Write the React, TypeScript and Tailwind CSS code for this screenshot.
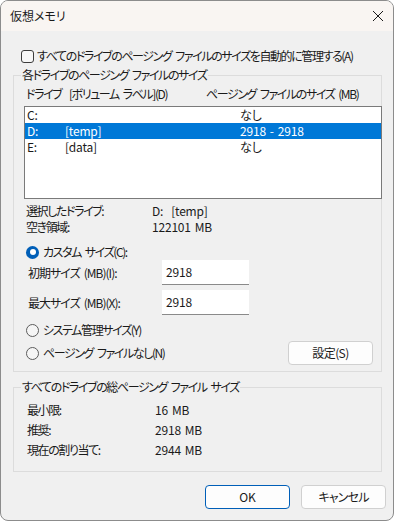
import React from "react";

const drives = [
  { d: "C:", l: "", s: "なし", sel: false },
  { d: "D:", l: "[temp]", s: "2918 - 2918", sel: true },
  { d: "E:", l: "[data]", s: "なし", sel: false },
];

// latin / numeric text is already close to the reference width
const lat = "tracking-[-0.2px] [word-spacing:1.5px]";

function Radio({ checked }: { checked?: boolean }) {
  if (checked) {
    return (
      <span className="flex h-[13px] w-[13px] shrink-0 items-center justify-center rounded-full bg-[#005fb8]">
        <span className="h-[6px] w-[6px] rounded-full bg-white"></span>
      </span>
    );
  }
  return <span className="h-[13px] w-[13px] shrink-0 rounded-full border border-[#5c5c5c] bg-[#f5f5f5]"></span>;
}

function Group({ title, className, children }: { title: string; className: string; children: React.ReactNode }) {
  return (
    <div className={`relative ml-[12px] w-[369px] border border-[#dcdcdc] ${className}`}>
      {/* legend sits over the top border */}
      <span className="absolute left-[7px] top-[-9px] whitespace-nowrap bg-[#f0f0f0] px-[1px] leading-[16px]">{title}</span>
      {children}
    </div>
  );
}

export default function App() {
  return (
    <div className="h-[523px] w-[396px] bg-white font-['Noto_Sans_CJK_JP',sans-serif] text-[12px] leading-[16px] tracking-[-1.4px] text-[#1a1a1a] [font-feature-settings:'palt'] [word-spacing:2.5px]">
      <div className="flex h-[521px] w-[394px] flex-col overflow-hidden rounded-[8px] border border-[#8c8c8c] bg-[#f0f0f0]">
        {/* title bar */}
        <div className="flex h-[30px] shrink-0 items-center justify-between bg-[#f9f5f2] pl-[9px] pr-[7px]">
          <span className="text-[12px] tracking-normal">仮想メモリ</span>
          <svg width="12" height="12" viewBox="0 0 12 12" className="mr-[2px]">
            <path d="M1 1 L11 11 M11 1 L1 11" stroke="#1a1a1a" strokeWidth="1" fill="none" />
          </svg>
        </div>

        {/* auto manage checkbox */}
        <div className="mt-[17px] flex h-[16px] items-center whitespace-nowrap pl-[20px]">
          <span className="h-[13px] w-[13px] shrink-0 rounded-[3px] border border-[#3c3c3c] bg-[#f7f7f7]"></span>
          <span className="ml-[3px]">すべてのドライブのページング ファイルのサイズを自動的に管理する(A)</span>
        </div>

        <Group title="各ドライブのページング ファイルのサイズ" className="mt-[11px] h-[297px]">
          <div className="mt-[10px] flex h-[16px] items-center whitespace-nowrap pl-[12px]">
            <span className="w-[180px]">ドライブ&nbsp; [ボリューム ラベル](D)</span>
            <span>ページング ファイルのサイズ (MB)</span>
          </div>

          <div className="ml-[10px] mt-[4px] h-[93px] w-[358px] border border-[#7a7a7a] bg-white">
            {drives.map((r) => (
              <div
                key={r.d}
                className={`flex h-[16px] items-center pl-[2px] ${lat} ${r.sel ? "bg-[#0078d7] text-white" : ""}`}
              >
                <span className="w-[38px]">{r.d}</span>
                <span className="w-[175px]">{r.l}</span>
                <span>{r.s}</span>
              </div>
            ))}
          </div>

          <div className="mt-[4px] flex h-[16px] items-center pl-[12px]">
            <span className="w-[126px]">選択したドライブ:</span>
            <span className={lat}>D:&nbsp; [temp]</span>
          </div>
          <div className="flex h-[16px] items-center pl-[12px]">
            <span className="w-[126px]">空き領域:</span>
            <span className={lat}>122101 MB</span>
          </div>

          <div className="mt-[9px] flex h-[16px] items-center pl-[12px]">
            <Radio checked />
            <span className="ml-[4px]">カスタム サイズ(C):</span>
          </div>

          <div className="flex h-[25px] items-center pl-[14px]">
            <span className="w-[134px] tracking-[-1px]">初期サイズ (MB)(I):</span>
            <div className={`flex h-[25px] w-[87px] items-center border-b border-[#8a8a8a] bg-white pl-[4px] ${lat}`}>2918</div>
          </div>
          <div className="mt-[5px] flex h-[25px] items-center pl-[14px]">
            <span className="w-[134px] tracking-[-1px]">最大サイズ (MB)(X):</span>
            <div className={`flex h-[25px] w-[87px] items-center border-b border-[#8a8a8a] bg-white pl-[4px] ${lat}`}>2918</div>
          </div>

          <div className="mt-[7px] flex h-[16px] items-center pl-[12px]">
            <Radio />
            <span className="ml-[4px]">システム管理サイズ(Y)</span>
          </div>

          <div className="mt-[3px] flex h-[24px] items-center pl-[12px]">
            <Radio />
            <span className="ml-[4px]">ページング ファイルなし(N)</span>
            <button className="ml-auto mr-[8px] flex h-[24px] w-[85px] items-center justify-center rounded-[4px] border border-[#d0d0d0] bg-[#fdfdfd] tracking-[-0.6px]">
              設定(S)
            </button>
          </div>
        </Group>

        <Group title="すべてのドライブの総ページング ファイル サイズ" className="mt-[15px] h-[85px]">
          <div className="mt-[12px] flex flex-col pl-[13px]">
            <div className="flex h-[20px] items-center">
              <span className="w-[128px]">最小限:</span>
              <span className={lat}>16 MB</span>
            </div>
            <div className="flex h-[20px] items-center">
              <span className="w-[128px]">推奨:</span>
              <span className={lat}>2918 MB</span>
            </div>
            <div className="flex h-[20px] items-center">
              <span className="w-[128px]">現在の割り当て:</span>
              <span className={lat}>2944 MB</span>
            </div>
          </div>
        </Group>

        {/* dialog buttons */}
        <div className="mt-[13px] flex gap-[11px] pl-[204px]">
          <button className={`flex h-[24px] w-[85px] items-center justify-center rounded-[4px] border-[1.5px] border-[#005fb8] bg-[#fdfdfd] ${lat}`}>
            OK
          </button>
          <button className="flex h-[24px] w-[85px] items-center justify-center rounded-[4px] border border-[#d0d0d0] bg-[#fdfdfd] tracking-[-0.8px]">
            キャンセル
          </button>
        </div>
      </div>
    </div>
  );
}
